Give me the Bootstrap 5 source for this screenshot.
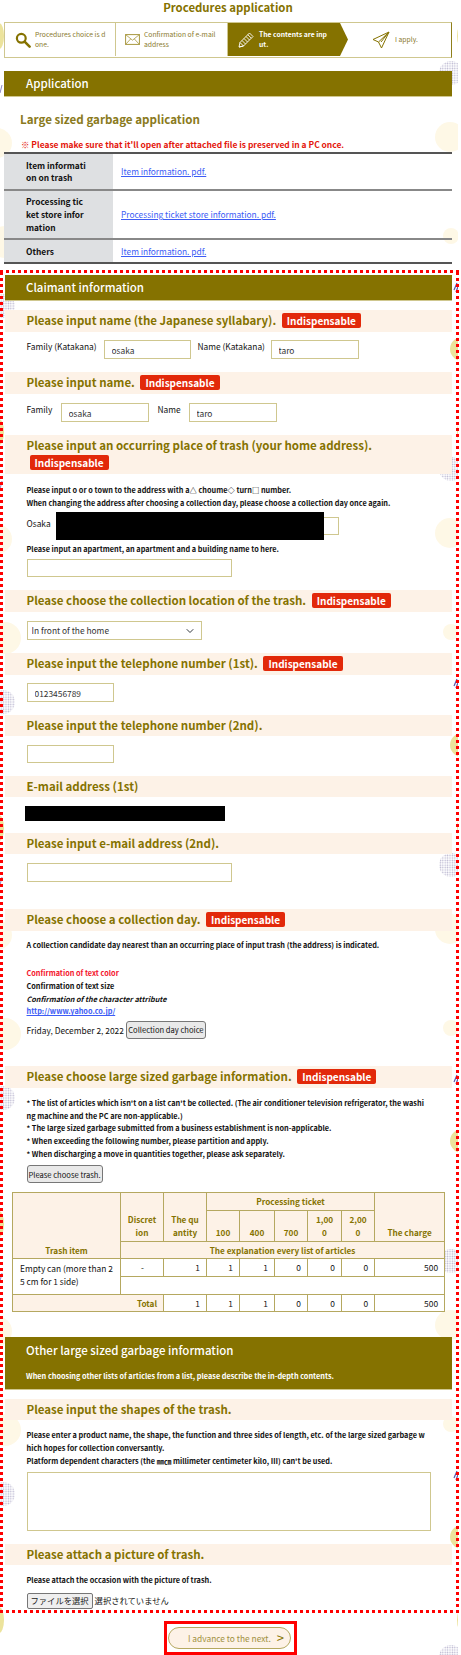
<!DOCTYPE html>
<html lang="en">
<head>
  <meta charset="UTF-8">
  <title>Procedures application</title>
  <link href="https://cdn.jsdelivr.net/npm/bootstrap@5.3.0/dist/css/bootstrap.min.css" rel="stylesheet">
  <style>
    body {
      margin: 0;
      width: 461px;
      height: 1655px;
      overflow: hidden;
      position: relative;
      background: #fff;
      font-family: "Noto Sans CJK JP", "Noto Sans", sans-serif;
      font-size: 8.4px;
      line-height: 12.7px;
      color: #111;
    }
    .deco-bg { position: absolute; left: 0; top: 0; z-index: -1; }
    .page-title { margin: 0; height: 22px; padding-right: 5px; font-size: 11.4px; line-height: 14px; font-weight: 700; color: #857200; text-align: center; }
    .step-bar { margin: 0 4px; height: 36px; width: 448px; border: 1.5px solid #cfc78f; border-right: 1.5px solid #8f7f1a; background: #fff; }
    .step-cell { width: 112px; height: 33px; display: flex; align-items: center; font-size: 6.8px; line-height: 9.5px; color: #8a7a2e; word-break: break-all; border-right: 1.5px solid #cfc78f; }
    .step-cell svg { flex: none; }
    .step-cell span { width: 71px; }
    .step-one { padding-left: 10px; gap: 4px; width: 111px; }
    .step-two { padding-left: 9px; gap: 4px; }
    .step-two span { width: 75px; }
    .step-now { width: 120px; padding-left: 10px; gap: 5px; background: #857200; color: #fff; font-weight: 700; border: 0; clip-path: polygon(0 0, 112px 0, 120px 50%, 112px 100%, 0 100%); }
    .step-now span { width: 70px; }
    .step-last { border: 0; width: 96px; padding-left: 24px; gap: 5px; }
    .olive-bar { margin: 13px 4px 0; width: 448px; height: 26px; padding-left: 22px; background: #857200; border-bottom: 1px solid #cfc78f; color: #fff; font-size: 11.5px; line-height: 25px; font-weight: 500; }
    .form-box .olive-bar { margin: 0 0 0 2px; width: 447px; padding-left: 21px; }
    .sub-title { margin: 14px 0 0 20px; font-size: 11.6px; line-height: 16px; font-weight: 700; color: #8a7a20; }
    .note-red { margin: 11px 0 0 21px; font-size: 8.45px; line-height: 12px; font-weight: 700; color: #e4160c; height: 12px; }
    .file-table { margin: 2px 4px 0; width: 448px; border-top: 2px solid #555; border-bottom: 2px solid #555; }
    .file-row { display: flex; border-bottom: 2px solid #888; }
    .file-row:last-child { border-bottom: 0; }
    .file-head { width: 109px; padding: 4.7px 25px 4.7px 22px; background: #dee0e2; font-weight: 700; word-break: break-all; }
    .file-link { padding-left: 8px; }
    .file-link a, .blue-link { color: #3d5cf5; }
    .form-box {
      width: 459px; height: 1343px; margin-top: 6px; padding: 5px 0 0 3px;
      background:
        repeating-linear-gradient(90deg, #f00 0 3px, transparent 3px 6px) top / 100% 3px no-repeat,
        repeating-linear-gradient(90deg, #f00 0 3px, transparent 3px 6px) bottom / 100% 3px no-repeat,
        repeating-linear-gradient(0deg, #f00 0 3px, transparent 3px 6px) left / 3px 100% no-repeat,
        repeating-linear-gradient(0deg, #f00 0 3px, transparent 3px 6px) right / 3px 100% no-repeat;
    }
    .sec-head { margin-left: 2px; width: 447px; min-height: 22px; padding: 3px 0 0 21.5px; background: #fdf2e7; font-size: 11.5px; line-height: 15px; font-weight: 700; color: #857200; }
    .must-tag { display: inline-block; height: 15px; margin-left: 3px; padding: 0 5px; background: #e2290a; border-radius: 2px; color: #fff; font-size: 10px; line-height: 15px; font-weight: 700; vertical-align: top; }
    .sec-body { margin-left: 23.5px; }
    .text-in { height: 19px; padding: 0 7px; border: 1.5px solid #cfc78f; border-radius: 0; background-color: #fff; font-size: 8.4px; line-height: 15px; color: #333; box-shadow: none; resize: none; }
    .small-bold { font-size: 7.3px; line-height: 12.7px; font-weight: 700; }
    .plain-btn { padding: 0; height: 18px; border: 1px solid #777; border-radius: 3px; background: #e9e9e9; color: #111; font-size: 7.6px; line-height: 15px; white-space: nowrap; text-align: center; }
    .trash-table { margin: 9px 0 0 9px; width: 432px; table-layout: fixed; border-collapse: collapse; border: 1.5px solid #cfc78f; font-size: 8.4px; line-height: 12.7px; }
    .trash-table th, .trash-table td { border: 1px solid #b5a860; padding: 2px 6px 2px 7px; word-break: break-all; }
    .trash-table th { background: #fdf2e7; color: #857200; font-weight: 700; font-size: 8.2px; text-align: center; vertical-align: bottom; padding: 2px 6px; }
    .trash-table td { text-align: right; background: #fff; }
    .next-wrap { width: 133px; height: 34px; margin: 8px 0 0 164px; border: 3px solid #f00; padding: 3px 3px 0 1px; }
    .next-pill { width: 123px; height: 22px; padding: 0 6px 0 19px; border: 1px solid #b5a860; border-radius: 11px; background: #fdf2e7; color: #a09040; font-size: 8.4px; line-height: 20px; }
    .next-pill b { font-size: 13px; font-weight: 400; color: #857200; }
    .redact-over { position: absolute; left: 29px; top: -5px; width: 268px; height: 28px; background: #000; }
    .file-btn { padding: 0 3px; height: 15.5px; border: 1px solid #767676; border-radius: 2px; background: #efefef; color: #222; font-size: 8.3px; line-height: 13px; white-space: nowrap; }
  </style>
</head>
<body>
  <svg class="deco-bg" width="458" height="1655" xmlns="http://www.w3.org/2000/svg">
    <defs>
      <pattern id="dotFill" width="2.4" height="2.4" patternUnits="userSpaceOnUse"><circle cx="1.2" cy="1.2" r="0.75" fill="#b9b5cf"/></pattern>
      <pattern id="decoTile" width="461" height="396" patternUnits="userSpaceOnUse">
        <ellipse cx="-1" cy="36" rx="5" ry="13" fill="#ece39c"/>
        <ellipse cx="462" cy="36" rx="5" ry="12" fill="#ece39c"/>
        <circle cx="451" cy="73" r="12" fill="url(#dotFill)"/>
        <circle cx="3" cy="306" r="12" fill="url(#dotFill)"/>
        <circle cx="450" cy="137" r="15" fill="#fef8e6"/>
        <circle cx="-3" cy="143" r="15" fill="#fef8e6"/>
        <circle cx="5" cy="242" r="16" fill="#fef8e6"/>
        <circle cx="451" cy="236" r="8" fill="#fef8e6"/>
        <ellipse cx="465" cy="349" rx="15" ry="13" fill="#ece39c"/>
        <path d="M454 290l3-7M456 292l3-8" stroke="#5a55a8" stroke-width="1.2"/>
        <path d="M0 93l2-8" stroke="#8d88c4" stroke-width="1"/>
      </pattern>
    </defs>
    <rect width="458" height="1655" fill="url(#decoTile)"/>
  </svg>

  <h1 class="page-title">Procedures application</h1>

  <div class="step-bar d-flex">
    <div class="step-cell step-one">
      <svg width="16" height="16" viewBox="0 0 16 16" fill="none" stroke="#857200"><circle cx="6.3" cy="6.3" r="4.4" stroke-width="2.2"/><path d="M9.6 9.6l5 5" stroke-width="2.6" stroke-linecap="round"/></svg>
      <span>Procedures choice is done.</span>
    </div>
    <div class="step-cell step-two">
      <svg width="15" height="11" viewBox="0 0 15 11" fill="none" stroke="#a8983f"><rect x=".6" y=".6" width="13.8" height="9.8" stroke-width="1"/><path d="M.6.6l6.9 5.6 6.9-5.6M.6 10.4l5-5.4M14.4 10.4l-5-5.4" stroke-width=".8"/></svg>
      <span>Confirmation of e-mail address</span>
    </div>
    <div class="step-cell step-now">
      <svg width="16" height="16" viewBox="0 0 16 16" fill="none" stroke="#fff" stroke-width=".9"><path d="M1 15l1-4.5L11.5 1 15 4.5 5.5 14zM1 15l4.5-1M2 10.5L5.5 14M4 8.5l3.5 3.5M6 6.5L9.5 10M8 4.5l3.5 3.5M9.8 2.7l3.5 3.5"/></svg>
      <span>The contents are input.</span>
    </div>
    <div class="step-cell step-last">
      <svg width="18" height="18" viewBox="0 0 18 18" fill="none" stroke="#857200" stroke-width="1" stroke-linejoin="round"><path d="M17 1L1 8.5l5.5 2.5L9.5 17zM17 1L6.5 11M17 1L9 11"/></svg>
      <span>I apply.</span>
    </div>
  </div>

  <div class="olive-bar">Application</div>
  <h2 class="sub-title">Large sized garbage application</h2>
  <p class="note-red mb-0">※ Please make sure that it'll open after attached file is preserved in a PC once.</p>

  <div class="file-table">
    <div class="file-row">
      <div class="file-head">Item information on trash</div>
      <div class="file-link d-flex align-items-center"><a href="#">Item information. pdf.</a></div>
    </div>
    <div class="file-row">
      <div class="file-head">Processing ticket store information</div>
      <div class="file-link d-flex align-items-center"><a href="#">Processing ticket store information. pdf.</a></div>
    </div>
    <div class="file-row">
      <div class="file-head">Others</div>
      <div class="file-link d-flex align-items-center"><a href="#">Item information. pdf.</a></div>
    </div>
  </div>

  <div class="form-box">
    <div class="olive-bar">Claimant information</div>

    <div class="sec-head" style="margin-top:9px">Please input name (the Japanese syllabary). <span class="must-tag">Indispensable</span></div>
    <div class="sec-body d-flex" style="margin-top:8px">
      <span style="width:77px">Family (Katakana)</span>
      <input class="text-in" style="width:87px" value="osaka">
      <span style="width:80px;padding-left:7px">Name (Katakana)</span>
      <input class="text-in" style="width:88px" value="taro">
    </div>

    <div class="sec-head" style="margin-top:13px">Please input name. <span class="must-tag">Indispensable</span></div>
    <div class="sec-body d-flex" style="margin-top:9px">
      <span style="width:34px">Family</span>
      <input class="text-in" style="width:88px" value="osaka">
      <span style="width:40px;padding-left:9px">Name</span>
      <input class="text-in" style="width:88px" value="taro">
    </div>

    <div class="sec-head" style="margin-top:13px;height:39px">Please input an occurring place of trash (your home address).<br><span class="must-tag" style="margin-top:2px">Indispensable</span></div>
    <div class="sec-body small-bold" style="margin-top:10px">Please input o or o town to the address with a△ choume◇ turn□ number.<br>When changing the address after choosing a collection day, please choose a collection day once again.</div>
    <div class="sec-body d-flex position-relative" style="margin-top:7px">
      <span style="width:29px">Osaka</span>
      <input class="text-in" style="width:283px;height:18px" value="">
      <div class="redact-over"></div>
    </div>
    <div class="sec-body small-bold" style="margin-top:8px">Please input an apartment, an apartment and a building name to here.</div>
    <div class="sec-body" style="margin-top:4px"><input class="text-in d-block" style="width:205px;height:18px"></div>

    <div class="sec-head" style="margin-top:13px">Please choose the collection location of the trash. <span class="must-tag">Indispensable</span></div>
    <div class="sec-body" style="margin-top:9px">
      <select class="form-select text-in" style="width:175px;padding:0 4px;background-position:right 6px center;background-size:10px 8px">
        <option>In front of the home</option>
      </select>
    </div>

    <div class="sec-head" style="margin-top:13px">Please input the telephone number (1st). <span class="must-tag">Indispensable</span></div>
    <div class="sec-body" style="margin-top:8px"><input class="text-in d-block" style="width:87px" value="0123456789"></div>

    <div class="sec-head" style="margin-top:13px;min-height:21px">Please input the telephone number (2nd).</div>
    <div class="sec-body" style="margin-top:9px"><input class="text-in d-block" style="width:87px;height:18px"></div>

    <div class="sec-head" style="margin-top:13px;min-height:21px">E-mail address (1st)</div>
    <div class="sec-body" style="margin:9px 0 0 21.5px;width:200px;height:15px;background:#000"></div>

    <div class="sec-head" style="margin-top:12px;min-height:21px">Please input e-mail address (2nd).</div>
    <div class="sec-body" style="margin-top:9px"><input class="text-in d-block" style="width:205px"></div>

    <div class="sec-head" style="margin-top:27px">Please choose a collection day. <span class="must-tag">Indispensable</span></div>
    <div class="sec-body small-bold" style="margin-top:8px">A collection candidate day nearest than an occurring place of input trash (the address) is indicated.</div>
    <div class="sec-body small-bold" style="margin-top:15px">
      <span style="color:#f4142c">Confirmation of text color</span><br>
      Confirmation of text size<br>
      <i>Confirmation of the character attribute</i><br>
      <a class="blue-link" href="#">http://www.yahoo.co.jp/</a>
    </div>
    <div class="sec-body d-flex align-items-center" style="margin-top:3px">
      <span>Friday, December 2, 2022</span>
      <button class="plain-btn" style="margin-left:2px;width:80px" type="button">Collection day choice</button>
    </div>

    <div class="sec-head" style="margin-top:27px">Please choose large sized garbage information. <span class="must-tag">Indispensable</span></div>
    <div class="sec-body small-bold" style="margin-top:9px;width:401px;word-break:break-all">
      * The list of articles which isn't on a list can't be collected. (The air conditioner television refrigerator, the washing machine and the PC are non-applicable.)<br>
      * The large sized garbage submitted from a business establishment is non-applicable.<br>
      * When exceeding the following number, please partition and apply.<br>
      * When discharging a move in quantities together, please ask separately.
    </div>
    <div class="sec-body" style="margin-top:5px"><button class="plain-btn" style="width:76px" type="button">Please choose trash.</button></div>

    <table class="trash-table">
      <colgroup>
        <col style="width:108px"><col style="width:43px"><col style="width:43px"><col style="width:33px"><col style="width:35px"><col style="width:33px"><col style="width:34px"><col style="width:33px"><col style="width:70px">
      </colgroup>
      <tr><th rowspan="3">Trash item</th><th rowspan="2">Discretion</th><th rowspan="2">The quantity</th><th colspan="5" style="vertical-align:middle">Processing ticket</th><th rowspan="2">The charge</th></tr>
      <tr><th>100</th><th>400</th><th>700</th><th>1,000</th><th>2,000</th></tr>
      <tr><th colspan="8" style="vertical-align:middle">The explanation every list of articles</th></tr>
      <tr><td rowspan="2" style="text-align:left;vertical-align:top;padding-top:3px">Empty can (more than 25 cm for 1 side)</td><td class="text-center">-</td><td>1</td><td>1</td><td>1</td><td>0</td><td>0</td><td>0</td><td>500</td></tr>
      <tr><td colspan="8" style="height:17.5px"></td></tr>
      <tr><th colspan="2" style="text-align:right;vertical-align:middle">Total</th><td>1</td><td>1</td><td>1</td><td>0</td><td>0</td><td>0</td><td>500</td></tr>
    </table>

    <div class="olive-bar" style="height:53px;margin-top:25px;line-height:13px;padding-top:7px">
      Other large sized garbage information
      <div class="small-bold" style="margin-top:13px">When choosing other lists of articles from a list, please describe the in-depth contents.</div>
    </div>

    <div class="sec-head" style="margin-top:9px;min-height:21px">Please input the shapes of the trash.</div>
    <div class="sec-body small-bold" style="margin-top:9px;width:401px;word-break:break-all">Please enter a product name, the shape, the function and three sides of length, etc. of the large sized garbage which hopes for collection conversantly.<br>Platform dependent characters (the ㎜㎝ millimeter centimeter kilo, Ⅲ) can't be used.</div>
    <div class="sec-body" style="margin-top:5px"><textarea class="text-in d-block" style="width:404px;height:59px"></textarea></div>

    <div class="sec-head" style="margin-top:13px;min-height:21px">Please attach a picture of trash.</div>
    <div class="sec-body small-bold" style="margin-top:9px">Please attach the occasion with the picture of trash.</div>
    <div class="sec-body d-flex align-items-center" style="margin-top:6px">
      <button class="file-btn" type="button">ファイルを選択</button>
      <span style="margin-left:2px;font-size:8.3px">選択されていません</span>
    </div>
  </div>

  <div class="next-wrap">
    <div class="next-pill d-flex justify-content-between">
      <span>I advance to the next.</span><b>&gt;</b>
    </div>
  </div>
</body>
</html>
